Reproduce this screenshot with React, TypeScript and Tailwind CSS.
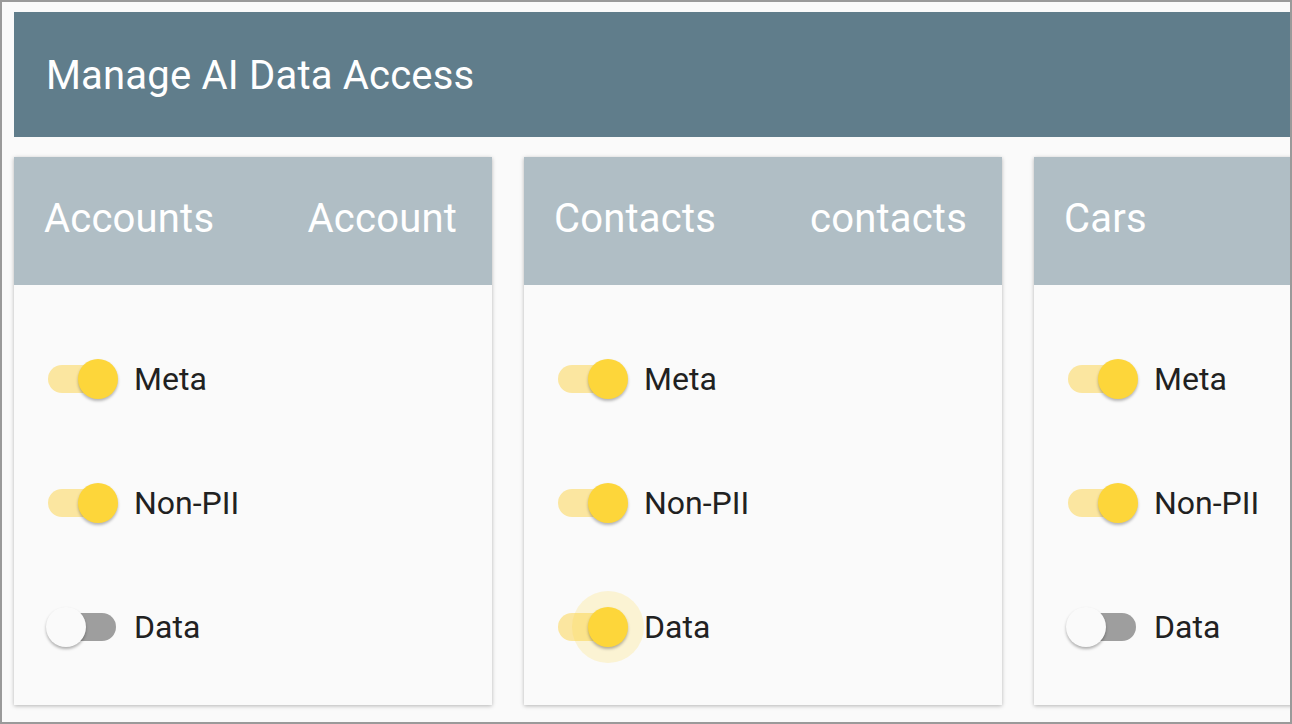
import React, { useState } from "react";

type Entity = { title: string; name?: string; meta: boolean; nonPii: boolean; data: boolean; focused?: boolean };

const entities: Entity[] = [
  { title: "Accounts", name: "Account", meta: true, nonPii: true, data: false },
  { title: "Contacts", name: "contacts", meta: true, nonPii: true, data: true, focused: true },
  { title: "Cars", name: "", meta: true, nonPii: true, data: false },
];

const Toggle = ({ checked, ripple, onChange }: { checked: boolean; ripple?: boolean; onChange: () => void }) => (
  <button type="button" onClick={onChange} className="relative w-[74px] h-[40px] shrink-0">
    {/* Track */}
    <span
      className={
        checked
          ? "absolute left-[2px] top-[6px] w-[68px] h-[28px] rounded-full bg-[#fbe6a0]"
          : "absolute left-[2px] top-[6px] w-[68px] h-[28px] rounded-full bg-[#9e9e9e]"
      }
    />
    {/* Ripple */}
    {ripple && checked && (
      <span className="absolute left-[16px] top-[-16px] w-[72px] h-[72px] rounded-full bg-[#fdd835]/20" />
    )}
    {/* Thumb */}
    <span
      className={
        checked
          ? "absolute left-[32px] top-0 w-[40px] h-[40px] rounded-full bg-[#fdd63a] shadow-[0_2px_3px_rgba(0,0,0,0.28)]"
          : "absolute left-0 top-0 w-[40px] h-[40px] rounded-full bg-[#fafafa] shadow-[0_2px_3px_rgba(0,0,0,0.3)]"
      }
    />
  </button>
);

const EntityCard = ({ entity }: { entity: Entity }) => {
  const [state, setState] = useState({ meta: entity.meta, nonPii: entity.nonPii, data: entity.data });

  const rows: { key: "meta" | "nonPii" | "data"; label: string }[] = [
    { key: "meta", label: "Meta" },
    { key: "nonPii", label: "Non-PII" },
    { key: "data", label: "Data" },
  ];

  return (
    <div className="w-[478px] shrink-0 bg-[#fafafa] shadow-[0_1px_4px_rgba(0,0,0,0.28)]">
      {/* Card header */}
      <div className="h-[128px] bg-[#b0bec5] flex items-center justify-between pl-[30px] pr-[35px] text-white text-[40px] tracking-[0.2px] leading-none pb-[4px]">
        <span>{entity.title}</span>
        <span>{entity.name}</span>
      </div>

      {/* Toggles */}
      <div className="flex flex-col pt-[74px] pb-[58px] gap-[84px] pl-[32px]">
        {rows.map((row) => (
          <div key={row.key} className="flex items-center h-[40px] gap-[14px]">
            <Toggle
              checked={state[row.key]}
              ripple={entity.focused && row.key === "data"}
              onChange={() => setState({ ...state, [row.key]: !state[row.key] })}
            />
            <span className="text-[32px] text-[#212121] leading-none">{row.label}</span>
          </div>
        ))}
      </div>
    </div>
  );
};

const App = () => {
  return (
    <div className="w-[1292px] h-[724px] overflow-hidden border-2 border-[#9a9a9a] bg-[#fafafa] font-['Roboto',sans-serif]">
      <div className="pt-[10px] pl-[12px]">
        {/* Title bar */}
        <div className="w-[1400px] h-[125px] bg-[#607d8b] flex items-center pl-[32px] pt-[2px]">
          <h1 className="text-[40px] tracking-[0.2px] text-white font-normal leading-none">Manage AI Data Access</h1>
        </div>

        {/* Entity cards */}
        <div className="flex gap-[32px] mt-[20px]">
          {entities.map((e) => (
            <EntityCard key={e.title} entity={e} />
          ))}
        </div>
      </div>
    </div>
  );
};

export default App;
